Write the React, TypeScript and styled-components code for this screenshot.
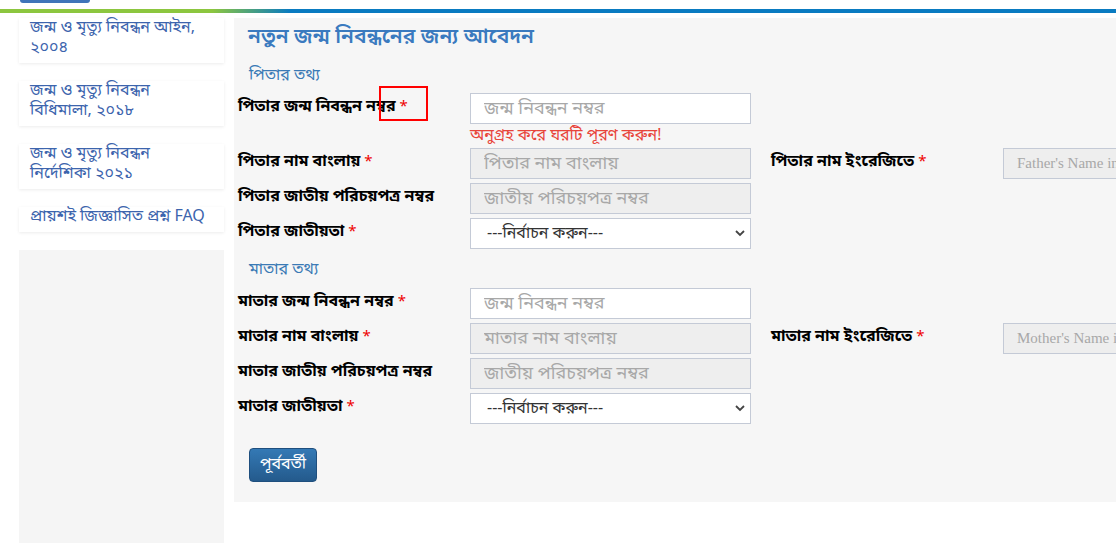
import React from 'react';
import styled, { createGlobalStyle } from 'styled-components';

const GlobalStyle = createGlobalStyle`
  html, body {
    margin: 0;
    padding: 0;
    background: #ffffff;
    overflow: hidden;
  }
  body {
    font-family: "Noto Sans Bengali", "Noto Serif Bengali", "Lohit Bengali", "Noto Sans", "DejaVu Sans", sans-serif;
    color: #000;
  }
`;

const bn = `"Noto Sans Bengali", "Noto Serif Bengali", "Lohit Bengali", "Noto Sans", "DejaVu Sans", sans-serif`;

// Header remains
const TopBar = styled.div`
  height: 9px;
  padding-left: 20px;
`;

const TopButton = styled.div`
  width: 70px;
  height: 3px;
  background: #3f74b9;
  border-radius: 0 0 6px 6px;
`;

const Stripe = styled.div`
  height: 4px;
  background: linear-gradient(to right, #8cc63f 0%, #8cc63f 19%, #0a7bc1 26%, #0a7bc1 100%);
`;

const PageBody = styled.div`
  display: flex;
  align-items: flex-start;
  gap: 10px;
  padding: 5px 0 0 19px;
`;

// Sidebar
const Sidebar = styled.nav`
  width: 205px;
  flex-shrink: 0;
  display: flex;
  flex-direction: column;
  gap: 18px;
`;

const SideCard = styled.a`
  display: block;
  background: #fff;
  padding: 0 11px 5px;
  font-size: 16px;
  line-height: 20px;
  color: #3c64ad;
  text-decoration: none;
  box-shadow: 0 1px 3px rgba(0, 0, 0, 0.08);
`;

const SideFiller = styled.div`
  height: 320px;
  background: #f5f5f5;
`;

// Main panel
const Main = styled.main`
  width: 1000px;
  flex-shrink: 0;
  background: #f6f6f6;
  padding: 8px 0 20px 4px;
  display: flex;
  flex-direction: column;
`;

const Title = styled.h2`
  margin: 0;
  padding-left: 10px;
  font-family: ${bn};
  font-size: 21px;
  line-height: 24px;
  font-weight: 600;
  color: #3a7abf;
`;

const SectionHeading = styled.h4<{ $top: number }>`
  margin: ${({ $top }) => $top}px 0 0;
  padding-left: 11px;
  font-size: 16px;
  line-height: 20px;
  font-weight: 400;
  color: #3a7ab5;
`;

const Fields = styled.div<{ $top: number }>`
  margin-top: ${({ $top }) => $top}px;
  display: flex;
  flex-direction: column;
  gap: 4px;
`;

const Row = styled.div`
  position: relative;
  display: flex;
  align-items: center;
`;

const Pair = styled.div`
  display: flex;
  align-items: center;
  & + & {
    margin-left: 20px;
  }
`;

const Label = styled.label`
  width: 232px;
  flex-shrink: 0;
  font-size: 16px;
  font-weight: 700;
  line-height: 20px;
  margin-top: -4px;
`;

const Req = styled.span`
  color: #e00;
  font-size: 15px;
  font-weight: 400;
  margin-left: 4px;
`;

const TextInput = styled.input<{ $disabled?: boolean; $latin?: boolean }>`
  box-sizing: border-box;
  width: 281px;
  height: 31px;
  padding: 0 13px;
  border: 1px solid #c4cad6;
  background: ${({ $disabled }) => ($disabled ? '#eeeeee' : '#ffffff')};
  font-family: ${({ $latin }) => ($latin ? '"Liberation Serif", serif' : bn)};
  font-size: ${({ $latin }) => ($latin ? '15px' : '18px')};
  color: #555;
  outline: none;
  &::placeholder {
    color: #a8a8a8;
  }
`;

const ErrorText = styled.div`
  margin-left: 232px;
  font-size: 16px;
  line-height: 16px;
  color: #e8443a;
`;

const SelectWrap = styled.div`
  position: relative;
  width: 281px;
`;

const Select = styled.select`
  box-sizing: border-box;
  width: 100%;
  height: 31px;
  padding: 0 30px 0 16px;
  border: 1px solid #c4cad6;
  background: #fff;
  appearance: none;
  font-family: ${bn};
  font-size: 16px;
  color: #333;
  outline: none;
`;

const Chevron = styled.svg`
  position: absolute;
  right: 6px;
  top: 11px;
  pointer-events: none;
`;

const Highlight = styled.div`
  position: absolute;
  left: 141px;
  top: -7px;
  width: 45px;
  height: 31px;
  border: 2px solid #ff0000;
`;

const PrevButton = styled.button`
  align-self: flex-start;
  margin: 24px 0 0 11px;
  height: 34px;
  padding: 0 10px;
  border: 1px solid #1f4f7e;
  border-radius: 4px;
  background: linear-gradient(to bottom, #3479b5, #245a8c);
  color: #fff;
  font-family: ${bn};
  font-size: 16px;
  cursor: pointer;
`;

const NationalitySelect: React.FC = () => (
  <SelectWrap>
    <Select defaultValue="">
      <option value="">---নির্বাচন করুন---</option>
    </Select>
    <Chevron width="10" height="8" viewBox="0 0 10 8">
      <path d="M1 2 L5 6 L9 2" fill="none" stroke="#444" strokeWidth="1.8" />
    </Chevron>
  </SelectWrap>
);

const sideLinks = [
  'জন্ম ও মৃত্যু নিবন্ধন আইন, ২০০৪',
  'জন্ম ও মৃত্যু নিবন্ধন বিধিমালা, ২০১৮',
  'জন্ম ও মৃত্যু নিবন্ধন নির্দেশিকা ২০২১',
  'প্রায়শই জিজ্ঞাসিত প্রশ্ন FAQ',
];

const App: React.FC = () => {
  return (
    <>
      <GlobalStyle />
      <TopBar>
        <TopButton />
      </TopBar>
      <Stripe />
      <PageBody>
        <Sidebar>
          {sideLinks.map((text) => (
            <SideCard key={text} href="#">
              {text}
            </SideCard>
          ))}
          <SideFiller />
        </Sidebar>
        <Main>
          <Title>নতুন জন্ম নিবন্ধনের জন্য আবেদন</Title>

          <SectionHeading $top={16}>পিতার তথ্য</SectionHeading>
          <Fields $top={7}>
            <Row>
              <Label>
                পিতার জন্ম নিবন্ধন নম্বর<Req>*</Req>
              </Label>
              <TextInput placeholder="জন্ম নিবন্ধন নম্বর" />
              <Highlight />
            </Row>
            <ErrorText>অনুগ্রহ করে ঘরটি পূরণ করুন!</ErrorText>
            <Row>
              <Pair>
                <Label>
                  পিতার নাম বাংলায়<Req>*</Req>
                </Label>
                <TextInput $disabled readOnly placeholder="পিতার নাম বাংলায়" />
              </Pair>
              <Pair>
                <Label>
                  পিতার নাম ইংরেজিতে<Req>*</Req>
                </Label>
                <TextInput $disabled $latin readOnly placeholder="Father's Name in English" />
              </Pair>
            </Row>
            <Row>
              <Label>পিতার জাতীয় পরিচয়পত্র নম্বর</Label>
              <TextInput $disabled readOnly placeholder="জাতীয় পরিচয়পত্র নম্বর" />
            </Row>
            <Row>
              <Label>
                পিতার জাতীয়তা<Req>*</Req>
              </Label>
              <NationalitySelect />
            </Row>
          </Fields>

          <SectionHeading $top={11}>মাতার তথ্য</SectionHeading>
          <Fields $top={8}>
            <Row>
              <Label>
                মাতার জন্ম নিবন্ধন নম্বর<Req>*</Req>
              </Label>
              <TextInput placeholder="জন্ম নিবন্ধন নম্বর" />
            </Row>
            <Row>
              <Pair>
                <Label>
                  মাতার নাম বাংলায়<Req>*</Req>
                </Label>
                <TextInput $disabled readOnly placeholder="মাতার নাম বাংলায়" />
              </Pair>
              <Pair>
                <Label>
                  মাতার নাম ইংরেজিতে<Req>*</Req>
                </Label>
                <TextInput $disabled $latin readOnly placeholder="Mother's Name in English" />
              </Pair>
            </Row>
            <Row>
              <Label>মাতার জাতীয় পরিচয়পত্র নম্বর</Label>
              <TextInput $disabled readOnly placeholder="জাতীয় পরিচয়পত্র নম্বর" />
            </Row>
            <Row>
              <Label>
                মাতার জাতীয়তা<Req>*</Req>
              </Label>
              <NationalitySelect />
            </Row>
          </Fields>

          <PrevButton type="button">পূর্ববর্তী</PrevButton>
        </Main>
      </PageBody>
    </>
  );
};

export default App;
